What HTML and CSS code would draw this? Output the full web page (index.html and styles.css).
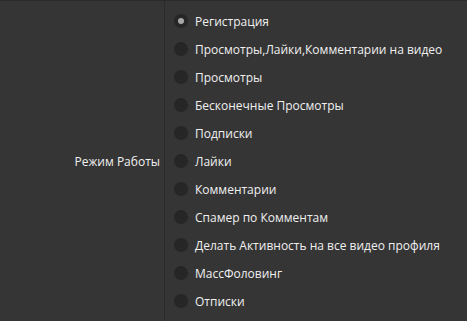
FILE: index.html
```html
<!DOCTYPE html>
<html lang="ru">
<head>
    <meta charset="UTF-8">
    <title>Режим Работы</title>
    <link rel="stylesheet" href="styles.css">
</head>
<body>
    <!-- Settings Row -->
    <div class="settings-row">
        <div class="field-label">Режим Работы</div>

        <div class="field-options">
            <label class="option"><input type="radio" name="mode" checked><span class="dot"></span>Регистрация</label>
            <label class="option"><input type="radio" name="mode"><span class="dot"></span>Просмотры,Лайки,Комментарии на видео</label>
            <label class="option"><input type="radio" name="mode"><span class="dot"></span>Просмотры</label>
            <label class="option"><input type="radio" name="mode"><span class="dot"></span>Бесконечные Просмотры</label>
            <label class="option"><input type="radio" name="mode"><span class="dot"></span>Подписки</label>
            <label class="option"><input type="radio" name="mode"><span class="dot"></span>Лайки</label>
            <label class="option"><input type="radio" name="mode"><span class="dot"></span>Комментарии</label>
            <label class="option"><input type="radio" name="mode"><span class="dot"></span>Спамер по Комментам</label>
            <label class="option"><input type="radio" name="mode"><span class="dot"></span>Делать Активность на все видео профиля</label>
            <label class="option"><input type="radio" name="mode"><span class="dot"></span>МассФоловинг</label>
            <label class="option"><input type="radio" name="mode"><span class="dot"></span>Отписки</label>
        </div>
    </div>
</body>
</html>
```

FILE: styles.css
```css
/* Global Styles */
body {
    font-family: 'Open Sans', 'Noto Sans', sans-serif;
    font-size: 12px;
    margin: 0;
    padding: 0;
    background: #353535;
    color: #f0f0f0;
    overflow: hidden;
}

/* Settings Row */
.settings-row {
    display: flex;
    border-top: 1px solid #2a2a2a;
    height: 320px;
}

.field-label {
    width: 165px;
    box-sizing: border-box;
    padding-right: 4px;
    border-right: 1px solid #2b2b2b;
    display: flex;
    align-items: center;
    justify-content: flex-end;
}

.field-options {
    padding: 6px 0 0 9px;
}

.option {
    display: flex;
    align-items: center;
    height: 28px;
    cursor: pointer;
}

.option input {
    display: none;
}

.dot {
    width: 14px;
    height: 14px;
    border-radius: 50%;
    background: #262626;
    margin-right: 7px;
    position: relative;
}

.option input:checked + .dot::after {
    content: "";
    position: absolute;
    top: 4px;
    left: 4px;
    width: 6px;
    height: 6px;
    border-radius: 50%;
    background: #a8a8a8;
}
```
